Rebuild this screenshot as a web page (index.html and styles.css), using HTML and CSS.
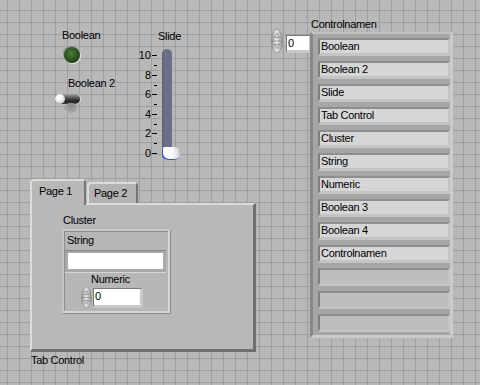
FILE: index.html
```html
<!DOCTYPE html>
<html>
<head>
<meta charset="utf-8">
<link rel="stylesheet" href="styles.css">
</head>
<body>
<div class="panel">

  <div class="ctl c-led">
    <div class="lbl">Boolean</div>
    <div class="led"></div>
  </div>

  <div class="ctl c-toggle">
    <div class="lbl toggle-lbl">Boolean 2</div>
    <div class="switch"><div class="knob"></div></div>
  </div>

  <div class="ctl c-slide">
    <div class="lbl slide-lbl">Slide</div>
    <div class="slide-body">
      <div class="scale">
        <span>10</span><span>8</span><span>6</span><span>4</span><span>2</span><span>0</span>
      </div>
      <svg class="ticks" width="6" height="118" viewBox="0 0 6 118">
        <g fill="#000">
          <rect x="0" y="9" width="5" height="1"/>
          <rect x="0" y="29" width="5" height="1"/>
          <rect x="0" y="48" width="5" height="1"/>
          <rect x="0" y="68" width="5" height="1"/>
          <rect x="0" y="87" width="5" height="1"/>
          <rect x="0" y="107" width="5" height="1"/>
          <rect x="2" y="19" width="3" height="1"/>
          <rect x="2" y="39" width="3" height="1"/>
          <rect x="2" y="58" width="3" height="1"/>
          <rect x="2" y="78" width="3" height="1"/>
          <rect x="2" y="97" width="3" height="1"/>
        </g>
      </svg>
      <div class="track"><div class="thumb"></div></div>
    </div>
  </div>

  <div class="ctl c-num">
    <svg class="inc" width="12" height="24" viewBox="0 0 12 24">
      <defs>
        <linearGradient id="incA" x1="0" x2="1" y1="0" y2="0">
          <stop offset="0" stop-color="#8c8c8c"/>
          <stop offset="0.45" stop-color="#ececec"/>
          <stop offset="1" stop-color="#8f8f8f"/>
        </linearGradient>
      </defs>
      <ellipse cx="6" cy="12" rx="5.6" ry="11.6" fill="url(#incA)" stroke="#8a8a8a" stroke-width="0.6"/>
      <line x1="0.8" y1="12" x2="11.2" y2="12" stroke="#8a8a8a" stroke-width="0.8"/>
      <path d="M6 4.2 L8.4 8.6 H3.6 Z" fill="#dcdcdc" stroke="#777" stroke-width="0.7"/>
      <path d="M6 19.8 L8.4 15.4 H3.6 Z" fill="#dcdcdc" stroke="#777" stroke-width="0.7"/>
    </svg>
    <div class="dbox dbox-top">0</div>
  </div>

  <div class="ctl c-list">
    <div class="lbl list-lbl">Controlnamen</div>
    <div class="list">
      <div class="item">Boolean</div>
      <div class="item">Boolean 2</div>
      <div class="item">Slide</div>
      <div class="item">Tab Control</div>
      <div class="item">Cluster</div>
      <div class="item">String</div>
      <div class="item">Numeric</div>
      <div class="item">Boolean 3</div>
      <div class="item">Boolean 4</div>
      <div class="item">Controlnamen</div>
      <div class="item empty"></div>
      <div class="item empty"></div>
      <div class="item empty"></div>
    </div>
  </div>

  <div class="ctl c-tab">
    <div class="tabs">
      <div class="tab tab1">Page 1</div>
      <div class="tab tab2">Page 2</div>
    </div>
    <div class="tabbody">
      <div class="lbl cluster-lbl">Cluster</div>
      <div class="cluster">
        <div class="lbl string-lbl">String</div>
        <div class="strframe"><div class="strfield"></div></div>
        <div class="lbl numeric-lbl">Numeric</div>
        <div class="numrow">
          <svg class="inc" width="11" height="21" viewBox="0 0 12 24">
            <defs>
              <linearGradient id="incB" x1="0" x2="1" y1="0" y2="0">
                <stop offset="0" stop-color="#8c8c8c"/>
                <stop offset="0.45" stop-color="#ececec"/>
                <stop offset="1" stop-color="#8f8f8f"/>
              </linearGradient>
            </defs>
            <ellipse cx="6" cy="12" rx="5.6" ry="11.6" fill="url(#incB)" stroke="#8a8a8a" stroke-width="0.6"/>
            <line x1="0.8" y1="12" x2="11.2" y2="12" stroke="#8a8a8a" stroke-width="0.8"/>
            <path d="M6 4.2 L8.4 8.6 H3.6 Z" fill="#dcdcdc" stroke="#777" stroke-width="0.7"/>
            <path d="M6 19.8 L8.4 15.4 H3.6 Z" fill="#dcdcdc" stroke="#777" stroke-width="0.7"/>
          </svg>
          <div class="dbox dbox-num">0</div>
        </div>
      </div>
    </div>
    <div class="lbl tab-lbl">Tab Control</div>
  </div>

</div>
</body>
</html>
```

FILE: styles.css
```css
* { box-sizing: border-box; }
html, body { margin: 0; padding: 0; }
body {
  width: 480px;
  height: 385px;
  overflow: hidden;
  font-family: "Liberation Sans", Arial, sans-serif;
  font-size: 11px;
  letter-spacing: -0.3px;
  line-height: 13px;
  color: #000;
}
.panel {
  position: relative;
  width: 480px;
  height: 385px;
  background-color: #b8b8b8;
  background-image:
    linear-gradient(to right, #9f9f9f 1px, transparent 1px),
    linear-gradient(to bottom, #9f9f9f 1px, transparent 1px);
  background-size: 12px 12px;
  background-position: 7px 10px;
}
.ctl { position: absolute; }
.lbl { white-space: nowrap; height: 13px; }

/* LED */
.c-led { left: 62px; top: 29px; }
.led {
  width: 16px;
  height: 16px;
  margin: 5px 0 0 2px;
  border-radius: 50%;
  background: radial-gradient(circle at 45% 40%, #4e7e3a 0%, #315a24 40%, #1c3614 85%);
  box-shadow: 1px 1px 0 #e4e4e4, -1px -1px 0 #8c8c8c;
}

/* toggle switch */
.c-toggle { left: 55px; top: 77px; }
.toggle-lbl { margin-left: 13px; }
.switch {
  position: relative;
  width: 25px;
  height: 10px;
  margin-top: 4px;
  border-radius: 5px;
  background: linear-gradient(to bottom, #a4a4a4 0%, #5a5a5a 35%, #262626 70%, #3a3a3a 100%);
  box-shadow: 1px 0 0 #d8d8d8;
}
.switch::after {
  content: "";
  position: absolute;
  left: 9px;
  top: 9px;
  width: 14px;
  height: 10px;
  border-radius: 50%;
  background: radial-gradient(ellipse at 50% 30%, #8a8a8a 0%, #a0a0a0 50%, rgba(184,184,184,0) 100%);
}
.knob {
  position: absolute;
  left: 0;
  top: 0;
  width: 10px;
  height: 10px;
  border-radius: 50%;
  background: radial-gradient(circle at 40% 35%, #ffffff 0%, #f0f0f0 40%, #a8a8a8 100%);
  z-index: 1;
}

/* slide */
.c-slide { left: 138px; top: 30px; }
.slide-lbl { margin-left: 20px; }
.slide-body { display: flex; margin-top: 3px; }
.scale { display: flex; flex-direction: column; width: 13px; }
.scale span { height: 19.6px; line-height: 19.6px; text-align: right; letter-spacing: 0; }
.ticks { margin-left: 1px; }
.track {
  position: relative;
  width: 10px;
  height: 109px;
  margin: 3px 0 0 4px;
  border-radius: 5px 5px 0 0;
  background: linear-gradient(to right, #5d6079 0%, #6c6f8a 30%, #6c6f8a 100%);
}
.thumb {
  position: absolute;
  left: 0;
  top: 98px;
  width: 18px;
  height: 13px;
  border-radius: 3px 6px 6px 6px;
  background: linear-gradient(to right, #ffffff 0%, #fafafa 55%, #e2e2e2 85%, #c4c4c4 100%);
  box-shadow: inset 1px -1px 0 #2f4fe0;
}

/* digital control */
.c-num { left: 271px; top: 29px; display: flex; align-items: flex-start; }
.dbox {
  background: #fff;
  border-top: 1px solid #7a7a7a;
  border-left: 1px solid #7a7a7a;
  border-right: 3px solid #c8c8c8;
  border-bottom: 3px solid #c8c8c8;
  padding-left: 1px;
  letter-spacing: 0;
}
.dbox-top { width: 26px; height: 18px; margin: 6px 0 0 3px; line-height: 14px; }

/* list */
.c-list { left: 310px; top: 18px; }
.list-lbl { margin-left: 1px; }
.list {
  display: flex;
  flex-direction: column;
  gap: 5px;
  width: 143px;
  height: 306px;
  margin-top: 1px;
  padding: 4px 0 0 5px;
  background: #a6a6a6;
  border-top: 2px solid #c2c2c2;
  border-left: 3px solid #888888;
  border-right: 3px solid #cbcbcb;
  border-bottom: 3px solid #cbcbcb;
}
.item {
  width: 132px;
  height: 18px;
  flex: none;
  padding-left: 1px;
  line-height: 13px;
  background: #d6d6d6;
  border-top: 2px solid #8e8e8e;
  border-left: 2px solid #7e7e7e;
  border-right: 2px solid #c4c4c4;
  border-bottom: 3px solid #c4c4c4;
  white-space: nowrap;
}
.item.empty { background: #bdbdbd; }

/* tab control */
.c-tab { left: 30px; top: 179px; }
.tabs { display: flex; align-items: flex-end; height: 24px; }
.tab {
  background: #b8b8b8;
  border-top: 2px solid #dcdcdc;
  border-left: 2px solid #dcdcdc;
  border-right: 2px solid #767676;
  border-radius: 4px 4px 0 0;
  white-space: nowrap;
}
.tab1 {
  position: relative;
  z-index: 1;
  width: 56px;
  height: 26px;
  margin-bottom: -2px;
  padding: 4px 0 0 7px;
}
.tab2 {
  width: 51px;
  height: 21px;
  margin-left: 1px;
  padding: 3px 0 0 5px;
  background: #b3b3b3;
}
.tabbody {
  width: 226px;
  height: 149px;
  background: #b8b8b8;
  border-top: 2px solid #dcdcdc;
  border-left: 2px solid #dcdcdc;
  border-right: 3px solid #707070;
  border-bottom: 3px solid #707070;
  padding-top: 9px;
}
.tab-lbl { margin: 2px 0 0 1px; }
.cluster-lbl { margin-left: 31px; }
.cluster {
  width: 108px;
  height: 84px;
  margin: 2px 0 0 30px;
  border: 2px solid;
  border-color: #c6c6c6 #d4d4d4 #d4d4d4 #c6c6c6;
  box-shadow: inset 1px 1px 0 #8e8e8e, 1px 1px 0 #8e8e8e;
  background: #b6b6b6;
}
.string-lbl { margin: 3px 0 0 3px; }
.strframe {
  width: 101px;
  height: 23px;
  margin: 3px 0 0 1px;
  padding: 2px 3px 2px 3px;
  background: #a9a9a9;
  border-top: 1px solid #858585;
  border-bottom: 1px solid #d6d6d6;
}
.strfield { height: 16px; background: #fff; }
.numeric-lbl { margin-left: 27px; }
.numrow { display: flex; align-items: flex-start; margin: 1px 0 0 17px; }
.dbox-num { width: 50px; height: 20px; margin: 1px 0 0 1px; line-height: 15px; }
```
